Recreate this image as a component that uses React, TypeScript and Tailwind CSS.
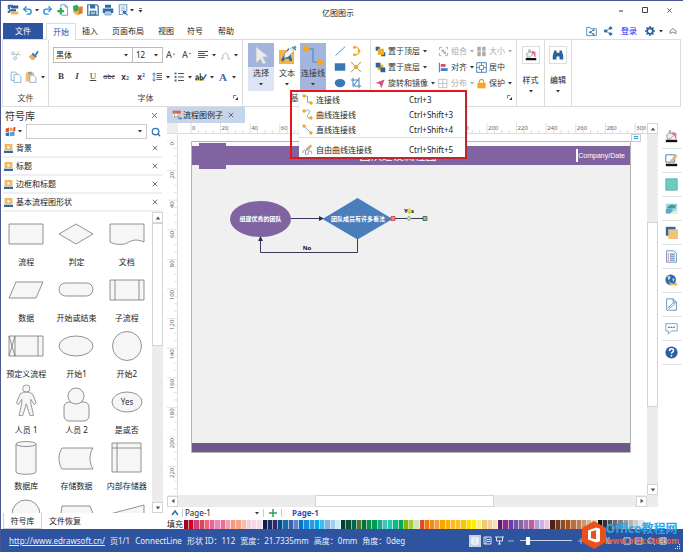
import type { ReactNode } from 'react';
import clsx from 'clsx';
import { Redo2, Search, Settings, Share2, Undo2, X } from 'lucide-react';

const SYMBOL_GROUPS = ['背景', '标题', '边框和标题', '基本流程图形状'];

const PALETTE = [
  '#a8001c', '#d0021b', '#c8457a', '#e0455f', '#e86a74', '#ef5fa0', '#e58bb0', '#e9738f', '#f0a0b4', '#f59a7c', '#f0a58c', '#f6bfa8', '#edd0e4', '#f3d8ea', '#f8dbe2',
  '#0a1f4c', '#1b2c66', '#3a2470', '#00508f', '#1a6bab', '#3c5fae', '#5f86c6', '#0078c8', '#1b8ad4', '#2d9be0', '#00a8ec', '#3dbcf2', '#84b4e4', '#a4cdec', '#c8ecf8',
  '#06402c', '#0b5134', '#006848', '#5a7030', '#00723c', '#0a8f4c', '#009a50', '#14aa96', '#4cc0b0', '#28c8b4', '#10b87c', '#00a860', '#84b800', '#a4cc3c', '#cce6c4',
  '#e04c1c', '#f07800', '#f08c1c', '#f49a4c', '#f6a800', '#f8b400', '#fcbc1c', '#f8c030', '#f8c800', '#fce000', '#fcf000', '#f8ec84', '#f0cc6c', '#ecd0a4', '#f8e0b4',
  '#5c1c70', '#8c2c90', '#6440a0', '#7454a8', '#8464a4', '#a070ac', '#c05ca4', '#b49cd4', '#c8b4e0', '#ecc4e0',
  '#4c2014', '#703818', '#8c4c28', '#a4501c', '#b8703c', '#c07c4c', '#c89870', '#d8b898', '#e4d0b8',
  '#101010', '#303436', '#4c5052', '#686c6e', '#7c8082', '#989c9e', '#b0b4b6', '#c8cccc', '#e0e4e4',
];

function Icon({ size = 12, box = '0 0 16 16', children }: { size?: number; box?: string; children: ReactNode }) {
  return (
    <svg width={size} height={size} viewBox={box} fill="none" className="shrink-0" aria-hidden="true">
      {children}
    </svg>
  );
}

function Caret({ muted = false }: { muted?: boolean }) {
  return (
    <svg width="4" height="3" viewBox="0 0 4 3" className="shrink-0" aria-hidden="true">
      <path d="M0 0h4L2 2.6z" fill={muted ? '#aaa' : '#333'} />
    </svg>
  );
}

function Launcher() {
  return (
    <svg width="5" height="5" viewBox="0 0 6 6" className="absolute right-1 bottom-1.5" aria-hidden="true">
      <path d="M.5 4V.5H4" stroke="#555" fill="none" />
      <path d="M6 2.5V6H2.5z" fill="#334" />
    </svg>
  );
}

function IconButton({ label, className, children }: { label: string; className?: string; children: ReactNode }) {
  return (
    <button type="button" aria-label={label} className={clsx('flex items-center justify-center shrink-0', className)}>
      {children}
    </button>
  );
}

/* ---------- title bar ---------- */

function TitleBar() {
  return (
    <header className="relative flex h-[22px] shrink-0 items-center justify-between pb-1 pl-1">
      <div className="flex items-center">
        <IconButton label="Edraw" className="w-[15px]">
          <Icon>
            <path d="M3 2h12v4H6zM3 7h9v3H3z" fill="#2f5b9c" />
            <path d="M1 1h7v2.5H4V7H1zM1 9h3v3H1z" fill="#3b6fb0" />
            <path d="M5 10h10v4H5z" fill="#f2b35a" />
          </Icon>
        </IconButton>
        <IconButton label="撤销" className="w-[15px]"><Undo2 size={11} strokeWidth={3} color="#2d8fd0" /></IconButton>
        <span className="flex w-[5px]"><Caret /></span>
        <IconButton label="重做" className="w-[15px]"><Redo2 size={11} strokeWidth={3} color="#2d8fd0" /></IconButton>
        <IconButton label="新建" className="w-[15px]">
          <Icon>
            <path d="M5 4V1h6l3 3v11H6" stroke="#4c86b8" fill="#fff" />
            <path d="M11 1v3h3" stroke="#4c86b8" />
            <path d="M5 5v9M.5 9.5h9" stroke="#27ae60" strokeWidth="3" />
          </Icon>
        </IconButton>
        <IconButton label="打开" className="w-[15px]">
          <Icon>
            <path d="M1 5l6-1 7-1v9l-6 3-6-3z" fill="#f0b04a" />
            <path d="M1 3l5-2 3 2-1 6-5 1z" fill="#2faa5c" />
            <path d="M9 5l5-2v9l-5 2z" fill="#e2743a" />
          </Icon>
        </IconButton>
        <IconButton label="保存" className="w-[15px]">
          <Icon>
            <path d="M1 1h12l2 2v12H1z" stroke="#2e6fa5" strokeWidth="1.6" />
            <path d="M4 1h7v5H4zM3.5 9h9v6h-9z" fill="#2e6fa5" />
            <path d="M5 11h6M5 13h6" stroke="#fff" />
          </Icon>
        </IconButton>
        <IconButton label="打印" className="w-[15px]">
          <Icon>
            <path d="M4 1h8v4H4zM1 6h14v6H1z" fill="#2e6ca6" />
            <path d="M4 9.5h8v5H4z" fill="#fff" stroke="#2e6ca6" />
            <path d="M5.5 12h5" stroke="#2e6ca6" />
          </Icon>
        </IconButton>
        <IconButton label="预览" className="w-[15px]">
          <Icon>
            <path d="M3 1h10v9M3 1v13h5" stroke="#6d9bc6" strokeWidth="1.4" />
            <path d="M5 4h6M5 6.5h6M5 9h4" stroke="#6d9bc6" />
            <circle cx="10" cy="11" r="2.5" fill="#3f76aa" />
            <path d="M11.5 12.5L14 15" stroke="#3f76aa" strokeWidth="1.5" />
          </Icon>
        </IconButton>
        <span className="flex w-2"><Caret /></span>
        <Icon size={5} box="0 0 5 6"><path d="M1 .5h3" stroke="#333" /><path d="M0 2.5h5L2.5 5.500z" fill="#333" /></Icon>
      </div>
      <h1 className="absolute inset-x-0 top-1 mx-auto w-20 -translate-x-1 text-center text-[8px] leading-4 text-[#222]">亿图图示</h1>
      <div className="flex items-center pr-0.5">
        <IconButton label="最小化" className="w-6"><Icon size={8} box="0 0 8 8"><path d="M2 5h4" stroke="#333" /></Icon></IconButton>
        <IconButton label="最大化" className="w-6"><Icon size={8} box="0 0 8 8"><path d="M1.5 1.5h5v5h-5z" stroke="#444" /></Icon></IconButton>
        <IconButton label="关闭" className="w-6"><X size={7} strokeWidth={3} color="#444" /></IconButton>
      </div>
    </header>
  );
}

function TabRow() {
  return (
    <nav className="flex h-4 shrink-0 items-stretch pl-0.5 text-[8px] text-[#222]">
      <button type="button" className="mr-[3px] w-10 bg-[#2f549f] text-white">文件</button>
      <button type="button" className="z-10 -mb-px w-[30px] border border-b-0 border-[#dcdcdc] bg-white text-[#2f549f]">开始</button>
      <button type="button" className="w-7">插入</button>
      <button type="button" className="w-12">页面布局</button>
      <button type="button" className="w-7">视图</button>
      <button type="button" className="w-[30px]">符号</button>
      <button type="button" className="w-8">帮助</button>
      <div className="ml-auto flex items-center gap-1.5 pr-1.5">
        <IconButton label="共享文件夹">
          <Icon size={11}>
            <path d="M1 3V14h14V4H7L6 2H1z" stroke="#4f86b0" strokeWidth="1.3" />
            <path d="M11 6L6 9l5 3" stroke="#2e6c9f" strokeWidth="1.3" />
            <circle cx="11" cy="6" r="1.3" fill="#2e6c9f" /><circle cx="6" cy="9" r="1.5" fill="#2e6c9f" /><circle cx="11" cy="12" r="1.3" fill="#2e6c9f" />
          </Icon>
        </IconButton>
        <IconButton label="分享" className="mr-0.5"><Share2 size={10} fill="#2e6c9f" color="#2e6c9f" strokeWidth={2} /></IconButton>
        <a href="#login" className="mr-0.5 text-[#1a1aff]">登录</a>
        <IconButton label="设置" className="gap-1">
          <Icon size={10}>
            <circle cx="8" cy="8" r="4.5" stroke="#2a6499" strokeWidth="3" />
            <path d="M8 0v3M8 13v3M0 8h3M13 8h3M2.300 2.300l2.200 2.200M11.500 11.500l2.200 2.200M2.300 13.700l2.200-2.200M11.500 4.500l2.200-2.200" stroke="#2a6499" strokeWidth="2.400" />
          </Icon>
          <Caret />
        </IconButton>
        <IconButton label="折叠功能区">
          <Icon size={8} box="0 0 8 8"><path d="M1 4l3-2.500L7 4v2.500L4 5 1 6.500z" stroke="#666" strokeWidth=".8" /></Icon>
        </IconButton>
      </div>
    </nav>
  );
}

/* ---------- ribbon ---------- */

function Group({ label, className, children, launcher = false }: { label?: string; className?: string; children?: ReactNode; launcher?: boolean }) {
  return (
    <section className={clsx('relative flex shrink-0 flex-col border-r border-[#dcdcdc]', className)}>
      <div className="flex-1">{children}</div>
      {label && <p className="pb-0.5 text-center text-[8px] leading-3 text-[#444]">{label}</p>}
      {launcher && <Launcher />}
    </section>
  );
}

function FontGroup() {
  return (
    <Group label="字体" launcher className="w-[194px]">
      <div className="mt-[7px] flex h-4 items-center pl-1 text-[#555]">
        <span className="relative flex h-4 w-[80px] items-center border border-[#bbb] pr-1">
          <select aria-label="字体" className="w-full appearance-none pl-0.5 text-[8px] leading-3 text-[#222]"><option>黑体</option></select>
          <Caret />
        </span>
        <span className="flex h-4 w-[30px] items-center border border-l-0 border-[#bbb] pr-1">
          <select aria-label="字号" className="w-full appearance-none pl-[3px] text-[8px] leading-3 text-[#222]"><option>12</option></select>
          <Caret />
        </span>
        <IconButton label="增大字号" className="w-4 text-[9px] font-medium"><span>A</span><Icon size={4} box="0 0 4 8"><path d="M0 3l2-2.500L4 3z" fill="#333" /></Icon></IconButton>
        <IconButton label="减小字号" className="w-4 text-[9px] font-medium"><span>A</span><Icon size={4} box="0 0 4 8"><path d="M0 0h4L2 2.500z" fill="#333" /></Icon></IconButton>
        <IconButton label="对齐" className="w-4"><Icon size={10} box="0 0 10 10"><path d="M0 1.500h10M0 3.500h7M0 5.500h10M0 7.500h7" stroke="#555" /></Icon></IconButton>
        <span className="flex w-1.5 justify-center"><Caret /></span>
        <IconButton label="弧形文字" className="w-4"><Icon size={11}><path d="M1 13h3c0-6 1-8 4-8s4 2 4 8h3" stroke="#aaa" strokeWidth="1.300" /></Icon></IconButton>
        <span className="flex w-1.5 justify-center"><Caret /></span>
      </div>
      <div className="mt-1.5 flex h-4 items-center pl-1 text-[#444]">
        <IconButton label="加粗" className="w-4 font-['Liberation_Serif',serif] text-[9px] font-bold">B</IconButton>
        <IconButton label="斜体" className="w-4 font-['Liberation_Serif',serif] text-[9px] font-bold italic">I</IconButton>
        <IconButton label="下划线" className="w-4 font-['Liberation_Serif',serif] text-[9px] underline">U</IconButton>
        <IconButton label="删除线" className="w-4 text-[7px] line-through">abc</IconButton>
        <IconButton label="下标" className="w-4 text-[8px] font-bold"><span>x</span><sub className="text-[5px] text-[#2e6fb0]">2</sub></IconButton>
        <IconButton label="上标" className="w-4 text-[8px] font-bold"><span>x</span><sup className="text-[5px] text-[#2e6fb0]">2</sup></IconButton>
        <IconButton label="行距" className="w-4">
          <Icon size={10} box="0 0 10 10"><path d="M4.500 1.500H10M4.500 3.500H10M4.500 5.500H10M4.500 7.500H10" stroke="#555" strokeWidth=".9" /><path d="M2 1v8M.5 2.500L2 .8l1.500 1.700M.5 7.500L2 9.200l1.500-1.700" stroke="#3a86c0" /></Icon>
        </IconButton>
        <span className="flex w-1.5 justify-center"><Caret /></span>
        <IconButton label="项目符号" className="w-4">
          <Icon size={10} box="0 0 10 10"><path d="M4 1.500h6M4 5h6M4 8.500h6" stroke="#555" /><path d="M.5.5h2v2h-2zM.5 4h2v2h-2zM.5 7.500h2v2h-2z" fill="#2e78b8" /></Icon>
        </IconButton>
        <span className="flex w-1.5 justify-center"><Caret /></span>
        <IconButton label="突出显示" className="w-4">
          <Icon size={12}><path d="M0 8h10v5H0z" fill="#ffd93b" /><path d="M1 7.500c2-2 3.500-1 3.500 1V12M4.500 9.500c-4-.5-4.500 2.500-1.500 2.500M7 3v9c4 .5 4-6 0-4" stroke="#333" strokeWidth="1.400" /><path d="M9 12l5-8 2 1-5 8z" fill="#3b78b8" /></Icon>
        </IconButton>
        <span className="flex w-1.5 justify-center"><Caret /></span>
        <IconButton label="字体颜色" className="w-4 font-['Liberation_Serif',serif] text-[11px] font-bold text-[#2f6fae]">A</IconButton>
        <span className="flex w-1.5 justify-center"><Caret /></span>
      </div>
    </Group>
  );
}

const CONNECTORS = [
  { name: '连接线', keys: 'Ctrl+3', path: 'M4 3h4v9h5' },
  { name: '曲线连接线', keys: 'Ctrl+Shift+3', path: 'M4 4c8-6 8 1 5 4s0 8 5 3' },
  { name: '直线连接线', keys: 'Ctrl+Shift+4', path: 'M3 3l10 10' },
];

function ConnectorMenu() {
  return (
    <div className="absolute top-[47px] -left-2.5 z-30 w-[177px] border-2 border-[#e8141c] pl-[7px] text-[8px] text-[#222]">
      <ul role="menu" className="bg-white shadow-[1px_1px_2px_#555]">
        {CONNECTORS.map((item) => (
          <li key={item.name} role="none">
            <button type="button" role="menuitem" className="flex h-[15px] w-full items-center pl-[3px] text-left leading-3">
              <Icon size={11}>
                <path d={item.path} stroke="#5b9bd0" strokeWidth="1.200" />
                <circle cx="3" cy="3" r="2.500" fill="#f5a81c" />
                <circle cx="13" cy="13" r="2.500" fill="#f5a81c" />
              </Icon>
              <span className="ml-[3px] flex-1">{item.name}</span>
              <span className="w-14">{item.keys}</span>
            </button>
          </li>
        ))}
        <li role="none" className="border-t border-[#ddd] pt-1">
          <button type="button" role="menuitem" className="flex h-[15px] w-full items-center pl-[3px] text-left leading-3">
            <Icon size={11}>
              <path d="M1 13c1-6 5-5 4 0s5 3 4 0 6-5 5 1" stroke="#5b8fc0" strokeWidth="1.300" />
              <path d="M6 10l1-4 6-5 1 2-5 6z" fill="#e5a850" stroke="#777" strokeWidth=".5" />
            </Icon>
            <span className="ml-[3px] flex-1">自由曲线连接线</span>
            <span className="w-14">Ctrl+Shift+5</span>
          </button>
        </li>
      </ul>
    </div>
  );
}

function ToolsGroup() {
  return (
    <Group label="基本工具" className="w-32">
      <div className="flex pt-[3px] pl-[5px] text-[8px] text-[#333]">
        <button type="button" className="flex h-12 w-[26px] flex-col items-center bg-[#dde5f4]">
          <span className="flex h-6 w-full items-center justify-center bg-[#a3b5dc]">
            <Icon size={17}><path d="M3 0l11 9-5 .5L12 15l-2.500 1L7 11l-4 4z" fill="#ececec" stroke="#ccc" strokeWidth=".5" /></Icon>
          </span>
          <span className="leading-3">选择</span>
          <span className="mt-1"><Caret /></span>
        </button>
        <button type="button" className="flex h-12 w-[26px] flex-col items-center">
          <span className="flex h-6 w-full items-center justify-center">
            <Icon size={19} box="0 0 19 19">
              <path d="M1 4h15v14H1z" fill="#f2b544" />
              <path d="M4 15L10 5l3 10M6 11.500h6" stroke="#2c66a4" strokeWidth="2.600" />
              <path d="M7 7l6-5 3 3-6 6-4 1z" fill="#f3f3f3" stroke="#999" strokeWidth=".5" />
              <path d="M14 1l4 3M16 0l2 2" stroke="#4c78a4" strokeWidth="1.500" />
            </Icon>
          </span>
          <span className="leading-3">文本</span>
          <span className="mt-1"><Caret /></span>
        </button>
        <div className="relative">
          <button type="button" aria-haspopup="menu" aria-expanded="true" className="flex h-12 w-[26px] flex-col items-center bg-[#a3b5dc]">
            <span className="flex h-6 w-full items-center justify-center">
              <Icon size={20} box="0 0 20 20">
                <path d="M3 4h7v13h7" stroke="#4f8cc4" strokeWidth="1.200" />
                <circle cx="3" cy="4" r="3" fill="#f5a81c" />
                <circle cx="17" cy="17" r="3" fill="#f5a81c" />
              </Icon>
            </span>
            <span className="leading-3">连接线</span>
            <span className="mt-1"><Caret /></span>
          </button>
          <ConnectorMenu />
        </div>
        <div className="ml-1.5 grid grid-cols-[16px_16px] grid-rows-[16px_16px_16px]">
          <IconButton label="直线"><Icon><path d="M2 14L15 2" stroke="#4a86bb" strokeWidth="1.200" /></Icon></IconButton>
          <IconButton label="弧线"><Icon><path d="M6 2c9 2 8 10 0 12" stroke="#f0a53a" strokeWidth="1.600" /><circle cx="6" cy="3" r="2" fill="#f5a81c" /><circle cx="6" cy="13" r="2" fill="#f5a81c" /><circle cx="12" cy="8" r="2" fill="#f5a81c" /></Icon></IconButton>
          <IconButton label="矩形"><Icon><path d="M1 3h14v10H1z" fill="#3a78b5" /></Icon></IconButton>
          <IconButton label="连接点"><Icon><path d="M2 2l12 12M14 2L2 14" stroke="#8fa6b8" strokeWidth="1.400" /><circle cx="8" cy="8" r="3" fill="#f5a81c" /><path d="M1 1h2v2H1zM13 1h2v2h-2zM1 13h2v2H1zM13 13h2v2h-2z" fill="#f0b860" /></Icon></IconButton>
          <IconButton label="椭圆"><Icon><ellipse cx="8" cy="8" rx="7" ry="5.500" fill="#3a78b5" /></Icon></IconButton>
          <IconButton label="裁剪"><Icon><path d="M4 1v11h11M1 4h11v11M13 1L5 11" stroke="#4a86bb" strokeWidth="1.400" /></Icon></IconButton>
        </div>
      </div>
    </Group>
  );
}

function ArrangeItem({ label, icon, muted = false, caret = true }: { label: string; icon: ReactNode; muted?: boolean; caret?: boolean }) {
  return (
    <button type="button" className={clsx('flex h-4 items-center whitespace-nowrap', muted ? 'text-[#aaa]' : 'text-[#333]')}>
      <Icon size={11}>{icon}</Icon>
      <span className="ml-0.5">{label}</span>
      {caret && <span className="ml-[3px] flex"><Caret muted={muted} /></span>}
    </button>
  );
}

function ArrangeGroup() {
  return (
    <Group className="w-[146px]" launcher>
      <div className="grid grid-cols-[63px_38px_40px] pt-[3px] pl-1 text-[8px]">
        <ArrangeItem label="置于顶层" icon={<><path d="M1 1h6v6H1zM9 9h6v6H9z" fill="#2f6397" /><path d="M4 4h9v9H4z" fill="#f5ae1f" /></>} />
        <ArrangeItem label="组合" muted icon={<><path d="M2 6V2h4M10 14h4v-4M2 10v4h3M11 2h3v3" stroke="#aaa" strokeWidth="1.300" /><path d="M5 5h4v4H5zM8 8h4v4H8z" fill="#bbb" /></>} />
        <ArrangeItem label="大小" muted icon={<path d="M2 1h5v6H2zM9 1h5v6H9zM2 8h5v7H2zM9 8h5v7H9z" fill="#aaa" />} />
        <ArrangeItem label="置于底层" icon={<><path d="M4 4h8v8H4z" fill="#f5ae1f" /><path d="M1 1h7v7H1zM8 8h7v7H8z" fill="#2f6397" /></>} />
        <ArrangeItem label="对齐" icon={<><path d="M2 1v14" stroke="#3a6fa8" strokeWidth="1.400" /><path d="M4 3h7v4H4z" fill="#d8476a" /><path d="M4 9h10v4H4z" fill="#3f7fc0" /></>} />
        <ArrangeItem label="居中" caret={false} icon={<><path d="M1 1h14v14H1z" stroke="#4a80b0" strokeWidth="1.400" /><path d="M5 5h6v6H5zM8 1v4M8 11v4M1 8h4M11 8h4" stroke="#4a80b0" strokeWidth="1.200" /></>} />
        <ArrangeItem label="旋转和镜像" icon={<path d="M1 7l13-5-5 13-2-6z" fill="#d2567c" />} />
        <ArrangeItem label="分布" muted icon={<path d="M1 2h12v12H1zM7 2v12M1 8h12" stroke="#bbb" strokeWidth="1.200" />} />
        <ArrangeItem label="保护" icon={<><path d="M5 8V5c0-4 6-4 6 0v3" stroke="#e8a41c" strokeWidth="1.800" /><path d="M2 7h12v8H2z" fill="#f8a81c" /></>} />
      </div>
    </Group>
  );
}

const fillBucket = (
  <>
    <path d="M2 6l5-3 4 4-5 4H3z" fill="#eee" stroke="#888" strokeWidth=".9" />
    <path d="M5 4V1h2v4" stroke="#888" strokeWidth=".9" />
    <path d="M9 2l5 2v7l-2-1V7L9 5z" fill="#e76b92" />
    <path d="M1 12h14v3H1z" fill="#111" />
  </>
);

function BigButton({ label, className, icon }: { label: string; className?: string; icon: ReactNode }) {
  return (
    <Group className={className}>
      <button type="button" className="flex w-full flex-col items-center pt-1.5 text-[8px] text-[#222]">
        <span className="flex h-[18px] w-[18px] items-center justify-center border border-[#ddd]"><Icon size={12}>{icon}</Icon></span>
        <span className="mt-2.5 leading-3">{label}</span>
        <span className="mt-1"><Caret /></span>
      </button>
    </Group>
  );
}

function Ribbon() {
  return (
    <div className="mr-0.5 ml-px flex h-[68px] shrink-0 border border-r-0 border-[#dcdcdc] bg-white">
      <Group label="文件" className="w-[46px]">
        <div className="grid grid-cols-[20px_14px] gap-y-1.5 pt-[7px] pl-[3px]">
          <IconButton label="剪切" className="h-4">
            <Icon size={11}><circle cx="3" cy="5" r="2" stroke="#6aa3cc" /><circle cx="6" cy="12" r="2" stroke="#6aa3cc" /><path d="M5 6l9 1M7 10l5-8" stroke="#aaa" /></Icon>
          </IconButton>
          <IconButton label="格式刷" className="h-4">
            <Icon size={11}><path d="M10 6l4-5 1.500 1.500L12 8z" fill="#2f69a8" /><path d="M1 9l5-3 6 4-4 5c-3 0-5-2-7-6z" fill="#f2b055" /><path d="M5 6l2-2 6 5-2 2z" fill="#3a74b4" /></Icon>
          </IconButton>
          <IconButton label="复制" className="h-4">
            <Icon size={12}><path d="M1.500 1.500h6l2 2v9h-8z" stroke="#6b9fc9" /><path d="M5.500 4.500h6l3 3v8h-9z" fill="#fff" stroke="#6b9fc9" /></Icon>
          </IconButton>
          <IconButton label="粘贴" className="ml-1 h-4 gap-1">
            <Icon size={12}><path d="M1 2h11v12H1z" fill="#f0bd6f" /><path d="M4 1h5v3H4z" fill="#999" /><path d="M6.500 5.500h5l3 3v7h-8z" fill="#fff" stroke="#6b9fc9" /></Icon>
            <Caret />
          </IconButton>
        </div>
      </Group>
      <FontGroup />
      <ToolsGroup />
      <ArrangeGroup />
      <BigButton label="样式" className="w-7" icon={fillBucket} />
      <BigButton label="编辑" className="w-[27px]" icon={<path d="M3 2h3v3h4V2h3l2 7v5h-5v-4H6v4H1V9z" fill="#2d639a" />} />
      <div className="flex-1 border-r border-[#dcdcdc]" />
    </div>
  );
}

/* ---------- symbol library ---------- */

const STICK_MAN = 'M14 8l-4 2-4 10 2 2 4-6v4L9 34h4l4-13 4 13h4l-3-14v-4l4 6 2-2-4-10-4-2z';

const SHAPES: { name?: string; art: ReactNode }[] = [
  { name: '流程', art: <path d="M3 10h34v20H3z" /> },
  { name: '判定', art: <path d="M20 10l17 10-17 10L3 20z" /> },
  { name: '文档', art: <path d="M3 10h34v18c-9-4-13-1-17 1s-12 2-17-1z" /> },
  { name: '数据', art: <path d="M10 12h27l-7 16H3z" /> },
  { name: '开始或结束', art: <rect x="3" y="13" width="34" height="13" rx="6.5" /> },
  { name: '子流程', art: <path d="M3 10h34v20H3zM8 10v20M32 10v20" /> },
  { name: '预定义流程', art: <path d="M3 10h34v20H3zM9 10v20M32 10v20M3 10l6 20M9 10L3 30" /> },
  { name: '开始1', art: <ellipse cx="20" cy="20" rx="17" ry="10" /> },
  { name: '开始2', art: <circle cx="20" cy="20" r="14.5" /> },
  { name: '人员 1', art: <g transform="translate(5 3) scale(.9)"><circle cx="17" cy="4" r="4" /><path d={STICK_MAN} /></g> },
  { name: '人员 2', art: <><rect x="8" y="20" width="25" height="19" rx="5" /><circle cx="20" cy="14" r="8" /></> },
  { name: '是或否', art: <><ellipse cx="20" cy="20" rx="15" ry="10" /><text x="20" y="23" textAnchor="middle" fontSize="8" fill="#333" stroke="none">Yes</text></> },
  { name: '数据库', art: <><path d="M10 6v28c0 3 20 3 20 0V6" /><ellipse cx="20" cy="6" rx="10" ry="2.5" /></> },
  { name: '存储数据', art: <path d="M6 10h31c-4 6-4 15 0 21H6c-4-6-4-15 0-21z" /> },
  { name: '内部存储器', art: <path d="M5 5h29v29H5zM10 5v29M5 10h29" /> },
  // only the tops of these are scrolled into view
  { art: <circle cx="20" cy="20" r="14" /> },
  { art: <path d="M6 12h28l4 10-4 10H3z" /> },
  { art: <path d="M3 20l34-9v20H3z" /> },
];

function ScrollArrow({ dir, className }: { dir: 'up' | 'down' | 'left' | 'right'; className?: string }) {
  const paths = { up: 'M1 6h6L4 2z', down: 'M1 2h6L4 6z', left: 'M6 1v6L2 4z', right: 'M2 1v6l4-3z' };
  return (
    <IconButton label={`scroll ${dir}`} className={clsx('h-[11px] w-[11px] border border-[#d4d4d4] bg-white', className)}>
      <Icon size={6} box="0 0 8 8"><path d={paths[dir]} fill="#555" /></Icon>
    </IconButton>
  );
}

function SymbolPanel() {
  return (
    <aside className="mr-1 flex w-[162px] shrink-0 flex-col">
      <div className="flex h-4 items-center justify-between pt-px pr-1 pl-1">
        <h2 className="text-[10px] leading-4 text-[#333]">符号库</h2>
        <IconButton label="关闭面板"><X size={9} strokeWidth={2} color="#444" /></IconButton>
      </div>
      <div className="flex h-[17px] items-center pr-0.5 pl-1">
        <Icon size={11}>
          <path d="M1 4l5-2v6l-5 1z" fill="#e04c3c" /><path d="M7 2l4 1v5L7 7z" fill="#f0a030" /><path d="M1 10l5-1v6l-5-1z" fill="#2e6fb5" /><path d="M7 9l7-1v6l-7 1z" fill="#58a0d8" /><path d="M12 2l3-1v6l-3 1z" fill="#d44" />
        </Icon>
        <span className="mr-1 ml-0.5"><Caret /></span>
        <label className="flex h-[15px] flex-1 items-center border border-[#ccc] pr-1">
          <input type="text" aria-label="搜索符号" className="w-full min-w-0 px-1 text-[8px] outline-none" />
          <Caret />
        </label>
        <IconButton label="搜索" className="ml-1"><Search size={10} strokeWidth={3} color="#2e70b8" /></IconButton>
      </div>
      <ul className="mr-px ml-0.5">
        {SYMBOL_GROUPS.map((name) => (
          <li key={name} className="flex h-[18px] items-center border-b-2 border-[#f0f0f0] pr-[3px] pl-px text-[8px] text-[#222]">
            <Icon size={9}>
              <path d="M1 0h14v11H1z" fill="#edbb68" /><path d="M6 4h4v4H6z" fill="#fff" /><path d="M0 12h16v4H0z" fill="#34679c" />
            </Icon>
            <span className="ml-[3px] flex-1">{name}</span>
            <IconButton label={`关闭 ${name}`}><X size={8} strokeWidth={2} color="#333" /></IconButton>
          </li>
        ))}
      </ul>
      <div className="flex min-h-0 flex-1">
        <div className="grid min-h-0 flex-1 auto-rows-[56px] grid-cols-3 overflow-hidden pt-px">
          {SHAPES.map((shape, i) => (
            <figure key={i} className="flex flex-col items-center">
              <svg width="40" height="42" viewBox="0 -1 40 42" fill="#f6f6f6" stroke="#777" strokeWidth=".8" className="shrink-0" aria-hidden="true">
                {shape.art}
              </svg>
              {shape.name && <figcaption className="text-[8px] leading-[14px] whitespace-nowrap text-[#222]">{shape.name}</figcaption>}
            </figure>
          ))}
        </div>
        <div className="flex w-[11px] flex-col bg-[#ececec]">
          <ScrollArrow dir="up" />
          <div className="h-[41%] border border-[#d4d4d4] bg-white" />
          <ScrollArrow dir="down" className="mt-auto" />
        </div>
      </div>
      <div className="flex h-4 items-center pl-0.5 text-[8px] text-[#222]">
        <button type="button" className="h-full w-[39px] border border-t-0 border-[#d0d0d0] bg-white">符号库</button>
        <button type="button" className="ml-[7px]">文件恢复</button>
      </div>
    </aside>
  );
}

/* ---------- drawing area ---------- */

const RULER_STEP = 29.6;
const marks = (count: number) => Array.from({ length: count }, (_, i) => i);

function TopRuler() {
  return (
    <svg height="11" className="w-full shrink-0 border-b border-[#ddd]" aria-hidden="true">
      {marks(16).map((i) => (
        <g key={i}>
          <path d={`M${24 + i * RULER_STEP} 0v11M${31.4 + i * RULER_STEP} 7v4M${38.8 + i * RULER_STEP} 7v4M${46.2 + i * RULER_STEP} 7v4`} stroke="#ddd" />
          <text x={25 + i * RULER_STEP} y="7" fontSize="6" fill="#666">{i * 20}</text>
        </g>
      ))}
      <path d="M0 0h11v11H0z" fill="#eee" />
    </svg>
  );
}

function LeftRuler() {
  return (
    <svg width="11" className="h-full shrink-0 border-r border-[#ddd]" aria-hidden="true">
      {marks(12).map((i) => (
        <g key={i}>
          <path d={`M0 ${7 + i * RULER_STEP}h11M7 ${14.4 + i * RULER_STEP}h4M7 ${21.8 + i * RULER_STEP}h4M7 ${29.2 + i * RULER_STEP}h4`} stroke="#e2e2e2" />
          <text transform={`translate(7 ${8 + i * RULER_STEP}) rotate(-90)`} textAnchor="end" fontSize="6" fill="#666">{i * 20}</text>
        </g>
      ))}
    </svg>
  );
}

function FlowchartPage() {
  return (
    <svg width="441" height="313" viewBox="191 141 441 313" className="absolute top-[7px] left-[13px]" role="img" aria-label="流程图例子">
      <path d="M191.500 141.500h439v311h-439z" fill="#f0f0f0" stroke="#b4b4b4" />
      <path d="M192 142h438v4H192z" fill="#fafafa" />
      <path d="M192 146h438v19H192z" fill="#8064a2" />
      <path d="M199 143h27v26h-27z" fill="#8064a2" />
      <path d="M192 443h438v9H192z" fill="#70588f" />
      <text x="398" y="160" textAnchor="middle" fontSize="11" fill="#fff">团队建设流程图</text>
      <path d="M576 149h2v13h-2z" fill="#fff" />
      <text x="625" y="158" textAnchor="end" fontSize="7" fill="#fff" fontFamily="Liberation Sans">Company/Date</text>

      <g stroke="#3a3a5c" fill="none">
        <path d="M291 218.500h30M357.500 239v13.500h-97V240M393 218.500h30" />
      </g>
      <path d="M319 216l5 2.500-5 2.500zM258 241l2.500-5 2.500 5zM426 216l-5 2.500 5 2.500z" fill="#2b2b4a" />
      <ellipse cx="260.500" cy="219" rx="30.500" ry="18" fill="#8064a2" />
      <path d="M357.500 198l35 21-35 20.500-35-20.500z" fill="#4a7ebb" />
      <g fontSize="6" textAnchor="middle" fill="#fff" fontWeight="700">
        <text x="260.500" y="221">组建优秀的团队</text>
        <text x="358" y="221">团队成员有许多看法</text>
      </g>
      <g fontSize="6" textAnchor="middle" fill="#111" fontWeight="700">
        <text x="307" y="250">No</text>
        <text x="409" y="213">Yes</text>
      </g>
      <path d="M409.500 208.500l2.500 2.500-2.500 2.500-2.500-2.500z" fill="#f5e020" stroke="#a08c00" strokeWidth=".4" />
      <path d="M391 216.500h4v4h-4z" fill="#e88" stroke="#b33" strokeWidth=".7" />
      <path d="M409 216l2 2.500-2 2.500-2-2.500z" fill="#bfe8a8" stroke="#4a9a3a" strokeWidth=".5" />
      <path d="M423 216.500h4v4h-4z" fill="#9ab8a0" stroke="#264" strokeWidth=".7" />
    </svg>
  );
}

function Workspace() {
  return (
    <main className="flex min-w-0 flex-1 flex-col">
      <div className="flex h-4 shrink-0">
        <div className="flex w-[78px] items-center bg-[#c5d5ec] pl-[5px] text-[8px] text-[#222]">
          <Icon size={10}><path d="M1 1h13v5H1z" fill="#e8604c" /><path d="M2 6h6v4H2z" fill="#fff" /><path d="M4 6v5h4" stroke="#5b9b4c" /><path d="M8 9h5v3H8z" fill="#f0b030" /><path d="M10 12h6v3h-6z" fill="#4a8ec8" /></Icon>
          <span className="ml-px">流程图例子</span>
          <IconButton label="关闭文档" className="ml-1"><X size={8} strokeWidth={2.5} color="#555" /></IconButton>
        </div>
      </div>
      <div className="flex min-h-0 flex-1">
        <div className="flex min-w-0 flex-1 flex-col">
          <TopRuler />
          <div className="flex min-h-0 flex-1">
            <LeftRuler />
            <div className="relative min-w-0 flex-1 overflow-hidden bg-white">
              <FlowchartPage />
              <div className="absolute top-0 right-1.5 border border-[#ccc] bg-white px-px">
                <Icon size={6} box="0 0 8 8"><path d="M1 2h6M1 4.500h6" stroke="#3aa5d8" strokeWidth="1.500" /></Icon>
              </div>
            </div>
          </div>
        </div>
        <div className="flex w-[11px] flex-col bg-[#ececec]">
          <ScrollArrow dir="up" />
          <div className="flex min-h-0 flex-1 flex-col">
            <div className="h-1/4" />
            <div className="h-[53%] border border-[#d4d4d4] bg-white" />
          </div>
          <ScrollArrow dir="down" />
        </div>
      </div>
      <div className="flex h-3 shrink-0 items-center bg-[#ececec] pr-[11px]">
        <ScrollArrow dir="left" />
        <div className="flex h-full flex-1 items-center">
          <div className="w-[30%]" />
          <div className="h-full w-[39%] border border-[#d4d4d4] bg-white" />
        </div>
        <ScrollArrow dir="right" />
      </div>
      <div className="flex h-3 shrink-0 items-center text-[8px] text-[#222]">
        <IconButton label="展开页面" className="w-[15px]"><Icon size={8} box="0 0 8 8"><path d="M1 6l3-4 3 4" stroke="#2e6cb0" strokeWidth="1.500" /></Icon></IconButton>
        <button type="button" className="flex w-[82px] items-center justify-between border-x border-[#ccc] pr-1 pl-0.5 leading-[8px]">Page-1 <Caret /></button>
        <IconButton label="新建页面" className="w-[18px] border-r border-[#ccc]"><Icon size={8} box="0 0 8 8"><path d="M4 0v8M0 4h8" stroke="#27a35a" strokeWidth="1.500" /></Icon></IconButton>
        <button type="button" className="ml-2.5 font-bold text-[#2f54b4]">Page-1</button>
      </div>
      <div className="flex h-[10px] shrink-0 items-center text-[8px] leading-[10px] text-[#222]">
        <span className="w-[17px] shrink-0">填充</span>
        <div className="mr-[14px] flex h-[9px] flex-1">
          {PALETTE.map((color, i) => (
            <span key={i} className="flex-1 border-r border-white/60" style={{ backgroundColor: color }} />
          ))}
        </div>
      </div>
    </main>
  );
}

const SIDE_TOOLS: { name: string; art: ReactNode }[] = [
  { name: '填充', art: fillBucket },
  { name: '线条', art: <><path d="M1 1h11v9H1z" fill="#fff" stroke="#2f69a8" /><path d="M6 9l7-8 2 1-6 8-3 1z" fill="#f0bf60" stroke="#999" strokeWidth=".4" /><path d="M1 12h14v3H1z" fill="#111" /></> },
  { name: '主题', art: <path d="M1 1h14v14H1z" fill="#6fcac0" stroke="#50b0a4" /> },
  { name: '图片', art: <><path d="M1 2h14v12H1z" fill="#a8d8ee" /><path d="M2 8c2-5 8-6 9-4l3-1-2 5z" fill="#35a584" /><path d="M1 9l6-1 3 3-4 3H1z" fill="#6aa0cc" /><path d="M8 12l7-2v4H8z" fill="#e4efcf" /></> },
  { name: '图层', art: <><path d="M1 1h12v11H1z" fill="#2f68a8" /><path d="M4 4h12v12H4z" fill="#efc47a" /></> },
  { name: '大纲', art: <><path d="M2 1h9l3 3v11H2z" fill="#fff" stroke="#4c7fb4" /><path d="M6 5h6M6 7.500h6M6 10h6M6 12.500h6" stroke="#3a6ca4" strokeWidth="1.200" /><path d="M3.500 5h1.500M3.500 7.500h1.500M3.500 10h1.500M3.500 12.500h1.500" stroke="#d04060" strokeWidth="1.200" /></> },
  { name: '超链接', art: <><circle cx="7" cy="7" r="6.500" fill="#2c68a6" /><path d="M3 3l3-1 1 3-3 3zM9 5l3 1-2 4zM5 9l2 1-1 2z" fill="#bfd8ec" /><path d="M6 12.500h4M11 12.500h4" stroke="#e8b450" strokeWidth="3" /></> },
  { name: '附件', art: <><path d="M2 1h8l4 4v10H2z" fill="#fff" stroke="#4c7fa8" /><path d="M10 1v4h4" stroke="#4c7fa8" /><path d="M5 11l5-5c1-1 2.500.500 1.500 1.500l-4.500 4.500c-1.500 1.500-3.500-.500-2-2" stroke="#4c8ab8" /></> },
  { name: '批注', art: <><path d="M1 2h14v9H8l-4 4v-4H1z" fill="#fff" stroke="#6b93b8" /><path d="M4 6.500h2M7 6.500h2M10 6.500h2" stroke="#3a70a4" strokeWidth="1.500" /></> },
  { name: '帮助', art: <><circle cx="8" cy="8" r="7.500" fill="#2a62a0" /><path d="M5.500 6c0-3.500 5-3.500 5-.5C10.500 7.500 8 7.500 8 9.500M8 11v2" stroke="#fff" strokeWidth="1.800" /></> },
];

function SideBar() {
  return (
    <aside className="ml-0.5 flex w-[23px] shrink-0 flex-col items-center pt-[18px]">
      {SIDE_TOOLS.map((tool) => (
        <IconButton key={tool.name} label={tool.name} className="h-6 w-5 border-b border-[#e2e2e2]">
          <Icon size={13}>{tool.art}</Icon>
        </IconButton>
      ))}
    </aside>
  );
}

/* ---------- status bar ---------- */

function StatusBar() {
  return (
    <footer className="relative flex h-[23px] shrink-0 items-center gap-[5px] bg-[#2f549f] pl-2 text-[8px] whitespace-nowrap text-[#e8eefa]">
      <a href="http://www.edrawsoft.cn/" className="underline">http://www.edrawsoft.cn/</a>
      <span>页1/1</span>
      <span>ConnectLine</span>
      <span>形状 ID：112</span>
      <span>宽度：21.7335mm</span>
      <span>高度：0mm</span>
      <span>角度：0deg</span>
      <div className="mr-4 ml-auto flex items-center">
        <IconButton label="普通视图" className="h-3 w-3 bg-[#c3d0e8]"><Icon size={8} box="0 0 8 8"><path d="M1 1h6v6H1zM1 3h6M1 5h6" stroke="#fff" /></Icon></IconButton>
        <IconButton label="页面视图" className="h-3 w-3"><Icon size={9} box="0 0 9 9"><path d="M1 1h7v7H1zM3 1v7M4 3.500h3M4 5.500h3" stroke="#dde6f6" /></Icon></IconButton>
        <IconButton label="演示" className="h-3 w-3"><Icon size={9} box="0 0 9 9"><path d="M0 1h9M1.500 1v4h6V1M4.500 5v3M3 8h3" stroke="#dde6f6" /></Icon></IconButton>
        <IconButton label="缩小" className="h-3 w-3"><Icon size={6} box="0 0 6 6"><path d="M0 3h6" stroke="#9fb4dc" /></Icon></IconButton>
        <input
          type="range"
          aria-label="缩放"
          min="0"
          max="100"
          defaultValue="12"
          className="mx-[3px] h-px w-[52px] appearance-none bg-[#c6d3ec] [&::-webkit-slider-thumb]:h-2 [&::-webkit-slider-thumb]:w-1 [&::-webkit-slider-thumb]:appearance-none [&::-webkit-slider-thumb]:bg-white"
        />
        <IconButton label="放大" className="h-3 w-3"><Icon size={6} box="0 0 6 6"><path d="M0 3h6M3 0v6" stroke="#9fb4dc" /></Icon></IconButton>
        <span className="w-6 text-right">%</span>
        <div className="ml-3 flex gap-1">
          <IconButton label="适合页面"><Icon size={8} box="0 0 9 9"><path d="M1 1h7v7H1z" stroke="#dde6f6" /></Icon></IconButton>
          <IconButton label="适合宽度"><Icon size={8} box="0 0 9 9"><path d="M1 1h7v7H1zM1 4.500h7" stroke="#dde6f6" /></Icon></IconButton>
          <IconButton label="缩放工具"><Icon size={8} box="0 0 9 9"><circle cx="4" cy="4" r="3" stroke="#dde6f6" /><path d="M6 6l3 3" stroke="#dde6f6" /></Icon></IconButton>
          <IconButton label="网格"><Icon size={8} box="0 0 9 9"><path d="M1 1h7v7H1zM3.500 1v7M6 1v7M1 3.500h7M1 6h7" stroke="#dde6f6" /></Icon></IconButton>
        </div>
      </div>
      <div className="absolute right-1 bottom-[3px] flex items-center">
        <svg width="24" height="28" viewBox="0 0 24 28" aria-hidden="true">
          <path d="M12 0l12 7v14l-12 7L0 21V7z" fill="#e8501c" />
          <path fillRule="evenodd" d="M6 9.500L14 6.500l4 1.200v12.600L14 21.500l-8-3zM9 10.500v6.700l5 1V9.300z" fill="#fff" />
        </svg>
        <p className="text-[12px] leading-3 font-bold text-[#2ba4ea]">
          Office教程网
          <a href="http://www.office26.com" className="block text-[8px] leading-3 text-[#e8683c]">www.office26.com</a>
        </p>
      </div>
      <svg width="6" height="6" viewBox="0 0 6 6" className="absolute right-0.5 bottom-0.5" aria-hidden="true">
        <path d="M4 0h1v1H4zM2 2h1v1H2zM4 2h1v1H4zM0 4h1v1H0zM2 4h1v1H2zM4 4h1v1H4z" fill="#dde6f6" />
      </svg>
    </footer>
  );
}

export default function App() {
  return (
    <div className="flex h-screen flex-col overflow-hidden border-t border-l border-[#4c5690] bg-white font-['Noto_Sans','Noto_Sans_CJK_SC',sans-serif]">
      <TitleBar />
      <TabRow />
      <Ribbon />
      <div className="flex min-h-0 flex-1">
        <SymbolPanel />
        <Workspace />
        <SideBar />
      </div>
      <StatusBar />
    </div>
  );
}
